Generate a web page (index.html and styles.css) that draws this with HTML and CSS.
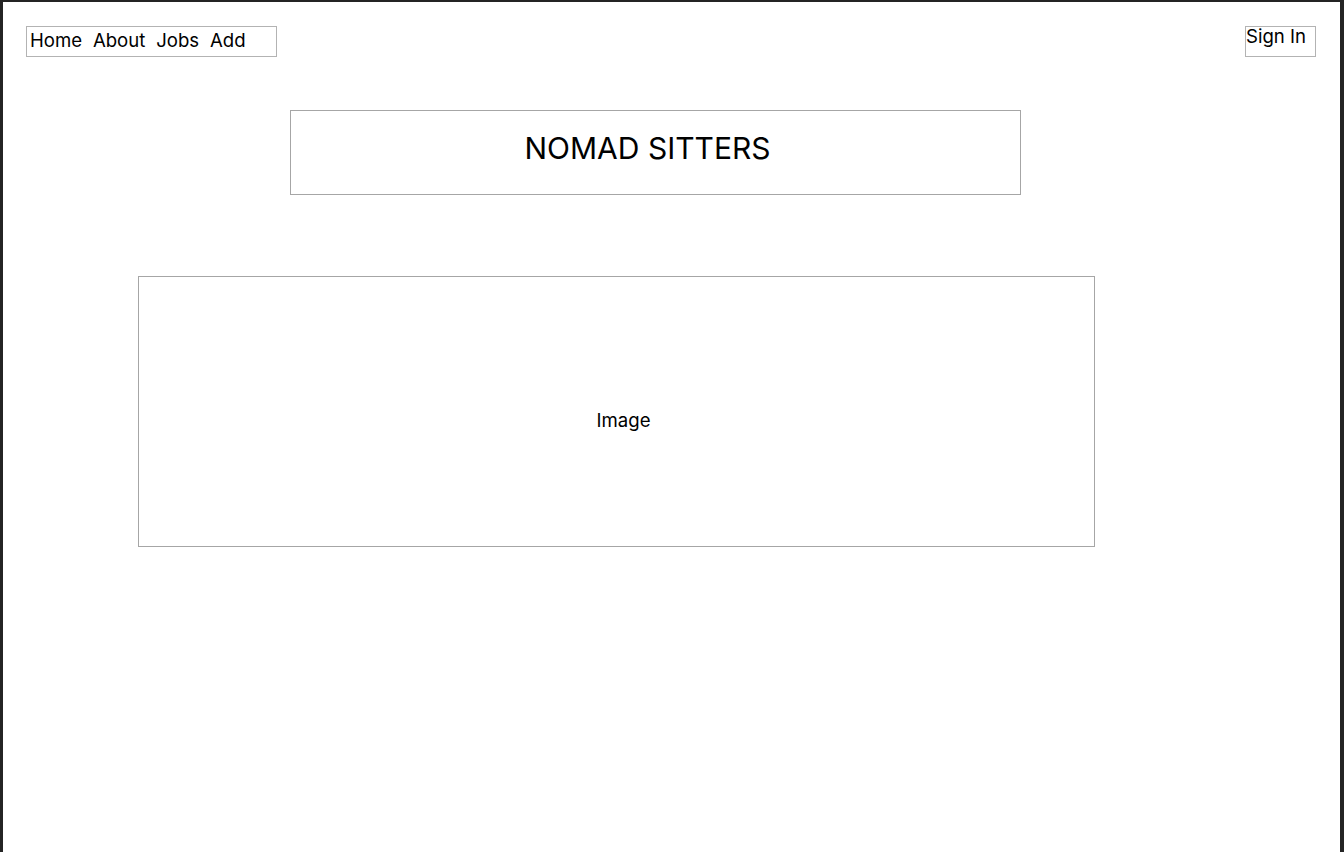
FILE: index.html
```html
<!DOCTYPE html>
<html lang="en">
<head>
<meta charset="utf-8">
<title>Nomad Sitters</title>
<link rel="stylesheet" href="styles.css">
</head>
<body>
<div class="frame">
  <header class="topbar">
    <nav class="nav">
      <a class="nav-link" href="#">Home</a>
      <a class="nav-link" href="#">About</a>
      <a class="nav-link" href="#">Jobs</a>
      <a class="nav-link" href="#">Add</a>
    </nav>
    <a class="signin" href="#">Sign In</a>
  </header>
  <main class="content">
    <div class="title-box"><h1 class="title">NOMAD SITTERS</h1></div>
    <div class="image-box"><span class="image-label">Image</span></div>
  </main>
</div>
</body>
</html>
```

FILE: styles.css
```css
* { box-sizing: border-box; }
html, body { margin: 0; padding: 0; background: #ffffff; }
body {
  font-family: Inter, "Noto Sans", "Liberation Sans", sans-serif;
  color: #000;
}
.frame {
  height: 852px;
  border-top: 2px solid #242424;
  border-left: 3px solid #242424;
  border-right: 4px solid #242424;
  background: #fff;
  overflow: hidden;
}
.topbar {
  display: flex;
  justify-content: space-between;
  align-items: flex-start;
  padding: 24px 24px 0 23px;
}
.nav {
  display: flex;
  gap: 10.8px;
  width: 251px;
  height: 31px;
  border: 1px solid #b3b3b3;
  padding: 1px 0 0 3px;
}
.nav-link, .signin {
  color: #000;
  text-decoration: none;
  font-size: 18.6px;
  line-height: 24px;
}
.signin {
  display: block;
  width: 71px;
  height: 31px;
  border: 1px solid #b3b3b3;
  padding: 0;
  line-height: 19px;
}
.content {
  display: flex;
  flex-direction: column;
  align-items: flex-start;
}
.title-box {
  margin: 53px 0 0 287px;
  width: 731px;
  height: 85px;
  border: 1px solid #a6a6a6;
  padding: 19px 16px 0 0;
  text-align: center;
}
.title {
  margin: 0;
  font-size: 30px;
  font-weight: 400;
  line-height: 36px;
}
.image-box {
  margin: 81px 0 0 135px;
  width: 957px;
  height: 271px;
  border: 1px solid #a6a6a6;
  display: flex;
  align-items: center;
  justify-content: center;
  padding: 16px 0 0 14px;
}
.image-label {
  font-size: 18.6px;
  line-height: 22px;
}
```
